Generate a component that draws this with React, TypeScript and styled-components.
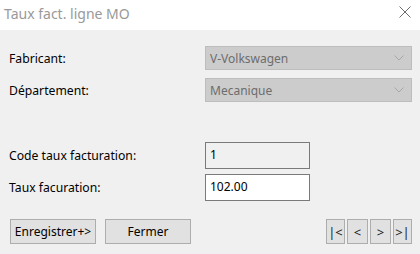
import React, { FC } from "react";
import styled, { createGlobalStyle } from "styled-components";

const GlobalStyle = createGlobalStyle`
	html, body {
		margin: 0;
		padding: 0;
		background: #f0f0f0;
	}
	body {
		font-family: "Noto Sans", "Open Sans", sans-serif;
		font-size: 12px;
		color: #000;
	}
`;

const Chevron: FC = () => (
	<svg width="10" height="6" viewBox="0 0 10 6">
		<path d="M0.5 0.5 L5 5 L9.5 0.5" fill="none" stroke="#a8a8a8" strokeWidth="1" />
	</svg>
);

const CloseIcon: FC = () => (
	<svg width="12" height="12" viewBox="0 0 12 12">
		<path d="M0.5 0.5 L11.5 11.5 M11.5 0.5 L0.5 11.5" stroke="#6b6b6b" strokeWidth="1" />
	</svg>
);

const App: FC = () => {
	return (
		<Window>
			<GlobalStyle />
			<TitleBar>
				<Title>Taux fact. ligne MO</Title>
				<CloseButton>
					<CloseIcon />
				</CloseButton>
			</TitleBar>
			<Body>
				<Form>
					<Row>
						<Label>Fabricant:</Label>
						<Select>
							<span>V-Volkswagen</span>
							<Chevron />
						</Select>
					</Row>
					<Row>
						<Label>Département:</Label>
						<Select>
							<span>Mecanique</span>
							<Chevron />
						</Select>
					</Row>
				</Form>
				<Form $top={40} $gap={5}>
					<Row>
						<Label>Code taux facturation:</Label>
						<Input $readOnly>1</Input>
					</Row>
					<Row>
						<Label>Taux facuration:</Label>
						<Input>102.00</Input>
					</Row>
				</Form>
				<Footer>
					<ButtonGroup>
						<Button $width={86}>Enregistrer+&gt;</Button>
						<Button $width={86}>Fermer</Button>
					</ButtonGroup>
					<NavGroup>
						<NavButton $width={19}>|&lt;</NavButton>
						<NavButton $width={21}>&lt;</NavButton>
						<NavButton $width={21}>&gt;</NavButton>
						<NavButton $width={19}>&gt;|</NavButton>
					</NavGroup>
				</Footer>
			</Body>
		</Window>
	);
};

export default App;

const Window = styled.div`
	width: 420px;
	height: 254px;
	display: flex;
	flex-direction: column;
	background: #f0f0f0;
	overflow: hidden;
`;

const TitleBar = styled.div`
	height: 30px;
	background: #fff;
	display: flex;
	align-items: center;
	justify-content: space-between;
	padding: 0 9px 0 4px;
	box-sizing: border-box;
`;

const Title = styled.div`
	font-size: 14px;
	color: #999;
	margin-top: -3px;
`;

const CloseButton = styled.div`
	display: flex;
	align-items: center;
	margin-top: -7px;
`;

const Body = styled.div`
	padding: 16px 8px 0 9px;
	display: flex;
	flex-direction: column;
`;

const Form = styled.div<{ $top?: number; $gap?: number }>`
	display: flex;
	flex-direction: column;
	gap: ${(p) => p.$gap ?? 8}px;
	margin-top: ${(p) => p.$top ?? 0}px;
`;

const Row = styled.div`
	display: flex;
	align-items: center;
`;

const Label = styled.div`
	width: 196px;
	font-size: 12.2px;
`;

const Select = styled.div`
	width: 207px;
	height: 24px;
	box-sizing: border-box;
	background: #cccccc;
	border: 1px solid #bdbdbd;
	color: #6d6d6d;
	display: flex;
	align-items: center;
	justify-content: space-between;
	padding: 0 7px 0 4px;
	font-size: 12px;
`;

const Input = styled.div<{ $readOnly?: boolean }>`
	width: 105px;
	height: 27px;
	box-sizing: border-box;
	border: 1px solid #7a7a7a;
	background: ${(p) => (p.$readOnly ? "#f0f0f0" : "#fff")};
	padding: 3px 0 0 4px;
	font-size: 12px;
`;

const Footer = styled.div`
	display: flex;
	justify-content: space-between;
	margin-top: 18px;
`;

const ButtonGroup = styled.div`
	display: flex;
	gap: 9px;
	margin-left: 1px;
`;

const NavGroup = styled.div`
	display: flex;
	gap: 2px;
`;

const Button = styled.div<{ $width: number }>`
	width: ${(p) => p.$width}px;
	height: 25px;
	box-sizing: border-box;
	background: #e1e1e1;
	border: 1px solid #adadad;
	display: flex;
	align-items: center;
	justify-content: center;
	font-size: 12px;
	white-space: nowrap;
	overflow: hidden;
`;

const NavButton = styled(Button)`
	font-size: 13px;
	color: #1a1a1a;
`;
